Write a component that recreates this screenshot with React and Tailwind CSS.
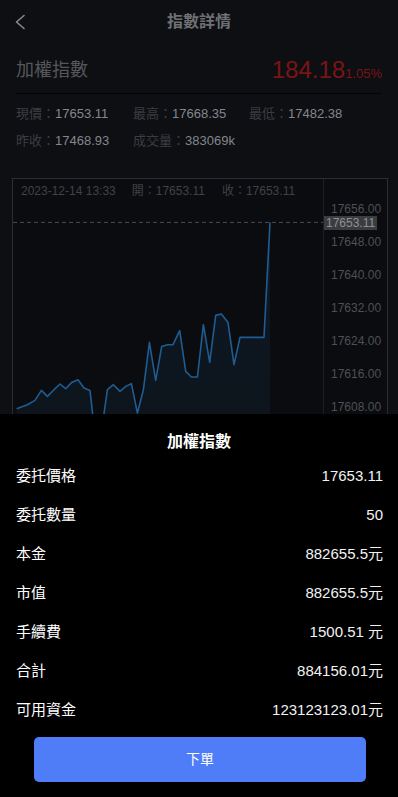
import React from "react";

const FONT = { fontFamily: '"Liberation Sans", "Noto Sans CJK TC", sans-serif' };

const pts = [
  [3.7, 229.7], [14.4, 225.7], [22, 221.4], [28.4, 211.4], [34.4, 217.4], [41, 210.7],
  [47, 205], [52.7, 209.7], [58.7, 203.4], [65, 200.7], [71, 209], [77, 211.4],
  [82, 256], [88, 256], [94.4, 210.7], [100.4, 205.7], [107, 212.4], [112.7, 207.4],
  [118.4, 204.7], [124.4, 234], [130.4, 210.7], [136.4, 163.4], [142.7, 201.4],
  [148.7, 167.4], [154.4, 165.7], [160, 165.7], [166.7, 151.7], [172.7, 192.4],
  [178.4, 198], [184.4, 198], [190.4, 145.7], [196.7, 183.4], [202.7, 136.4],
  [208.4, 135], [215, 143.4], [221, 185.7], [227, 158.4], [251, 158.4], [257, 43.4],
];

const linePath = pts.map((p, i) => (i === 0 ? "M" : "L") + p[0] + " " + p[1]).join(" ");
const areaPath = linePath + " L257 300 L3.7 300 Z";

const axis = ["17656.00", "17648.00", "17640.00", "17632.00", "17624.00", "17616.00", "17608.00", "17600.00"];

const stats = [
  [["現價：", "17653.11"], ["最高：", "17668.35"], ["最低：", "17482.38"]],
  [["昨收：", "17468.93"], ["成交量：", "383069k"]],
];

const rows = [
  ["委托價格", "17653.11"],
  ["委托數量", "50"],
  ["本金", "882655.5元"],
  ["市值", "882655.5元"],
  ["手續費", "1500.51 元"],
  ["合計", "884156.01元"],
  ["可用資金", "123123123.01元"],
];

export default function App() {
  return (
    <div className="relative h-[797px] w-[398px] overflow-hidden bg-[#0e0f13]" style={FONT}>
      {/* header */}
      <div className="relative flex h-[44px] items-center justify-center">
        <svg className="absolute left-[14px] top-[14px]" width="12" height="16" viewBox="0 0 12 16" fill="none">
          <path d="M10 1.5 L2.5 8 L10 14.5" stroke="#8a8a8c" strokeWidth="1.6" strokeLinecap="round" strokeLinejoin="round" />
        </svg>
        <span className="text-[16px] font-bold text-[#6f7074]">指數詳情</span>
      </div>

      {/* title row */}
      <div className="mx-4 flex h-[50px] items-center justify-between border-b border-[#040405] pt-[3px]">
        <span className="text-[18px] text-[#55575b]">加權指數</span>
        <div className="flex items-baseline">
          <span className="text-[24px] leading-none text-[#7b1416]">184.18</span>
          <span className="text-[13px] leading-none text-[#7b1416]">1.05%</span>
        </div>
      </div>

      {/* stats */}
      <div className="px-4 pt-[6px] text-[13px]">
        {stats.map((r, i) => (
          <div key={i} className="grid h-[27px] grid-cols-[117px_116px_auto] items-center">
            {r.map(([l, v]) => (
              <div key={l} className="whitespace-nowrap">
                <span className="text-[#3b3d42]">{l}</span>
                <span className="text-[#84868b]">{v}</span>
              </div>
            ))}
          </div>
        ))}
      </div>

      {/* chart */}
      <div className="ml-3 mt-[24px] flex h-[280px] w-[376px] border border-[#2c2e33] bg-[#0b0c0f]">
        <div className="relative w-[310px]">
          <svg className="absolute left-0 top-0" width="310" height="280" viewBox="0 0 310 280">
            <defs>
              <linearGradient id="fillg" x1="0" y1="0" x2="0" y2="1">
                <stop offset="0" stopColor="#1e5a8e" stopOpacity="0.18" />
                <stop offset="1" stopColor="#1e5a8e" stopOpacity="0.08" />
              </linearGradient>
            </defs>
            <line x1="0" y1="43.4" x2="310" y2="43.4" stroke="#4a4c51" strokeWidth="1" strokeDasharray="4 3" />
            <path d={areaPath} fill="url(#fillg)" />
            <path d={linePath} fill="none" stroke="#1f5c92" strokeWidth="1.6" strokeLinejoin="round" />
          </svg>
          <div className="relative flex items-center whitespace-nowrap pl-[8px] pt-[4px] text-[12px] leading-[16px] text-[#404247]">
            <span>2023-12-14 13:33</span>
            <span className="ml-[16px]">開：17653.11</span>
            <span className="ml-[17px]">收：17653.11</span>
          </div>
        </div>
        <div className="relative flex-1 border-l border-[#1c1e22]">
          <div className="flex flex-col pl-[7px] pt-[14px] text-[12px] text-[#4d5055]">
            {axis.map((a) => (
              <div key={a} className="h-[33px] leading-[33px]">{a}</div>
            ))}
          </div>
          <div className="absolute left-0 top-[37px] bg-[#3a3c40] px-[2px] text-[12px] leading-[14px] text-[#8e9095]">
            17653.11
          </div>
        </div>
      </div>

      {/* bottom sheet */}
      <div className="absolute bottom-0 left-0 right-0 h-[383px] bg-black">
        <div className="pt-[17px] text-center text-[16px] font-bold leading-[22px] text-white">加權指數</div>
        <div className="mt-[4px]">
          {rows.map(([l, v]) => (
            <div key={l} className="flex h-[39px] items-center justify-between pl-4 pr-[15px] text-[15px] text-white">
              <span>{l}</span>
              <span className="text-[#f2f2f2]">{v}</span>
            </div>
          ))}
        </div>
        <button className="ml-[34px] mt-[7px] flex h-[45px] w-[332px] items-center justify-center rounded-[5px] bg-[#4f7cf7] text-[14px] text-white">
          下單
        </button>
      </div>
    </div>
  );
}
